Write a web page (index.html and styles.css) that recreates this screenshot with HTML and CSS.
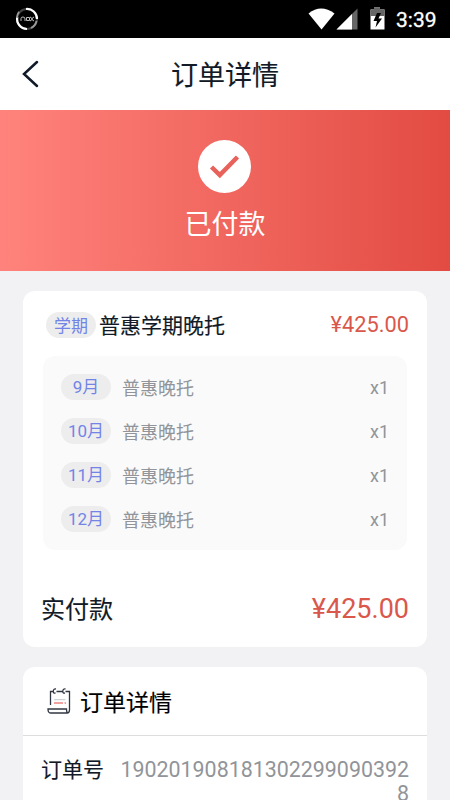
FILE: index.html
```html
<!DOCTYPE html>
<html lang="zh-CN">
<head>
<meta charset="utf-8">
<title>订单详情</title>
<link rel="stylesheet" href="styles.css">
</head>
<body>
<header class="status">
  <svg class="nox" width="24" height="24" viewBox="0 0 24 24" fill="none">
    <circle cx="12" cy="12" r="10" stroke="#444" stroke-width="2"/>
    <path d="M11 2A10 10 0 0 1 22 12M2.3 10A10 10 0 0 0 12 22" stroke="#fff" stroke-width="2.2"/>
    <path d="M4 4.8A10 10 0 0 0 2 11M21.5 14A10 10 0 0 1 16 21" stroke="#999" stroke-width="1.8"/>
    <path d="M6 14v-2.500q0-1.500 2-1.500t2 2v2M11.500 10.500h3v3h-3zM15 10.300h1l2 3.400h1M19 10.300h-1l-2 3.400h-1" stroke="#bbb" stroke-width="1"/>
  </svg>
  <div class="indicators">
    <svg width="80" height="24" viewBox="0 0 80 24">
      <path d="M0.500 5.500Q13-4.500 26.500 5.500L13.500 21.500Z" fill="#fff"/>
      <path d="M49.500 0.500V21.500H28.500Z" fill="#666"/>
      <path d="M44 6V21.500H28.500Z" fill="#fff"/>
      <path d="M62.500 1.500H66V-.5H72V1.500H76.500V21.500H62.500Z" fill="#fff"/>
      <path d="M62.500 1.500H66V-.5H72V1.500H76.500V8H62.500Z" fill="#666"/>
      <path d="M69 5L65.500 13H69L67.500 19.500L74 10.500H70.500L73 5Z" fill="#000"/>
    </svg>
    <span class="clock">3:39</span>
  </div>
</header>
<nav class="nav">
  <svg class="back" width="18" height="28" viewBox="0 0 18 28"><path d="M15 2L2 14L15 26" fill="none" stroke="#111a28" stroke-width="2.500" stroke-linecap="round"/></svg>
  <h1>订单详情</h1>
</nav>
<section class="banner">
  <svg width="54" height="54" viewBox="0 0 54 54"><circle cx="26.500" cy="27.500" r="26.500" fill="#fff"/><path d="M13.500 28L21.800 36L39.500 18" fill="none" stroke="#e9615b" stroke-width="4.500"/></svg>
  <p>已付款</p>
</section>
<main>
  <section class="card order">
    <div class="product"><span class="tag">学期</span><h2>普惠学期晚托</h2><span class="price">¥425.00</span></div>
    <ul class="months">
      <li><span class="tag">9月</span><span>普惠晚托</span><span class="qty">x1</span></li>
      <li><span class="tag">10月</span><span>普惠晚托</span><span class="qty">x1</span></li>
      <li><span class="tag">11月</span><span>普惠晚托</span><span class="qty">x1</span></li>
      <li><span class="tag">12月</span><span>普惠晚托</span><span class="qty">x1</span></li>
    </ul>
    <div class="total"><span class="total-label">实付款</span><span class="paid">¥425.00</span></div>
  </section>
  <section class="card">
    <div class="heading">
      <svg width="26" height="28" viewBox="0 0 26 28" fill="none" stroke="#303743" stroke-width="1.300">
        <path d="M3.500 18V4.500H6.500M9.500 4.500H15.500M18.500 4.500H22.500V23Q22.500 26 20 26H3.500Q1 26 1 22H19.500Q19.500 26 21 25.500M8.500 6Q6 6.500 6.300 4T9 2M18 6Q15.500 6.500 15.800 4T18.500 2"/>
        <path d="M7 12.700H18.500" stroke="#c5c8cd" stroke-width="1"/><path d="M7 16H16M17.500 16H19" stroke="#ef8580"/>
      </svg>
      <h2>订单详情</h2>
    </div>
    <div class="detail"><span class="label">订单号</span><span class="number">1902019081813022990903928</span></div>
  </section>
</main>
</body>
</html>
```
FILE: styles.css
```css
* { box-sizing: border-box; }
html, body { height: 100%; overflow: hidden; }
body { margin: 0; background: #f2f2f5; color: #111a26; font-family: Roboto, "Noto Sans CJK SC", sans-serif; }
h1, h2, p, ul { margin: 0; padding: 0; font-weight: 400; }
h1, h2, .total-label, .label { -webkit-text-stroke: 0.15px currentColor; }
svg { display: block; flex: none; overflow: visible; }
.status { height: 38px; background: #000; display: flex; justify-content: space-between; align-items: center; padding: 0 11px 0 15px; }
.indicators { display: flex; align-items: center; gap: 8px; color: #fff; }
.indicators svg { margin: 1px 0 0 -1px; }
.clock { font-size: 21px; line-height: 24px; width: 43px; margin-top: 2px; white-space: nowrap; -webkit-text-stroke: 0.3px #fff; }
.nav { height: 72px; background: #fff; display: grid; grid-template-columns: 60px 1fr 60px; align-items: center; }
.back { margin-left: 22px; }
.nav h1 { font-size: 27px; line-height: 36px; text-align: center; padding-top: 3px; }
.banner { height: 161px; padding-top: 29px; background: linear-gradient(to right, #ff837c, #e24b42); color: #fff; display: flex; flex-direction: column; align-items: center; }
.banner p { font-size: 27px; line-height: 36px; margin-top: 14px; }
main { padding: 20px 23px; }
.card { background: #fff; border-radius: 12px; margin-bottom: 20px; }
.order { height: 356px; padding: 20px 18px 0 19px; }
.product { display: flex; align-items: center; height: 28px; padding-left: 4px; }
.tag { width: 50px; height: 26px; border-radius: 13px; background: #ededee; color: #7284e6; font-size: 17px; line-height: 26px; text-align: center; }
.product .tag { line-height: 28px; }
.product h2 { font-size: 21px; line-height: 28px; margin-left: 3px; padding-top: 1px; }
.price { margin-left: auto; color: #da574c; font-size: 21.8px; margin-top: -1px; }
.months { list-style: none; width: 364px; margin: 17px 0 0 1px; height: 194px; border-radius: 12px; background: #fafafa; padding: 9px 18px; }
.months li { height: 44px; display: flex; align-items: center; color: #919499; font-size: 18px; }
.months .tag { margin-right: 11px; }
.qty { margin-left: auto; }
.total { display: flex; justify-content: space-between; align-items: center; height: 36px; margin: 41px 0 0 -1px; font-size: 24px; }
.total-label { margin-top: -3px; }
.paid { color: #da574c; font-size: 27px; }
.heading { height: 69px; border-bottom: 1px solid #dcdddf; display: flex; align-items: center; padding-left: 24px; gap: 7px; }
.heading svg { margin-top: -1px; }
.heading h2 { font-size: 23px; line-height: 32px; color: #000; padding-top: 5px; }
.detail { display: flex; justify-content: space-between; padding: 22px 18px 20px; }
.label { font-size: 21px; line-height: 25px; }
.number { width: 290px; color: #919499; font-size: 21.4px; line-height: 24px; text-align: right; word-break: break-all; }
```
